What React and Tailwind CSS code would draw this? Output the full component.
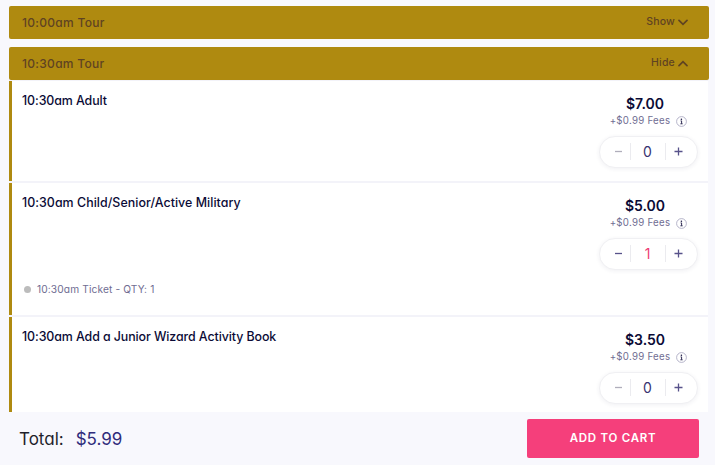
import { useState } from "react";

const tickets = [
  {
    name: "10:30am Adult",
    price: 7,
    qty: 0,
    height: "h-[102px]",
    tracking: "tracking-[-0.08px]",
  },
  {
    name: "10:30am Child/Senior/Active Military",
    price: 5,
    qty: 1,
    detail: "10:30am Ticket",
    height: "h-[134px]",
    tracking: "tracking-[0.05px]",
  },
  {
    name: "10:30am Add a Junior Wizard Activity Book",
    price: 3.5,
    qty: 0,
    height: "h-[102px]",
    tracking: "tracking-[-0.08px]",
  },
];

const FEE = 0.99;

function Chevron({ up }) {
  return (
    <svg width="10" height="7" viewBox="0 0 10 7" fill="none">
      <path
        d={up ? "M1 5.6 5 1.6l4 4" : "M1 1.4l4 4 4-4"}
        stroke="currentColor"
        strokeWidth="1.7"
        strokeLinecap="round"
      />
    </svg>
  );
}

function InfoIcon() {
  return (
    <svg width="11" height="11" viewBox="0 0 11 11" fill="none">
      <circle cx="5.5" cy="5.5" r="4.9" stroke="#a3a1bd" strokeWidth="0.8" />
      <circle cx="5.4" cy="3.2" r="0.8" fill="#1d1a45" />
      <path d="M4.6 4.9h1v2.8M4.4 7.8h2.2" stroke="#1d1a45" strokeWidth="0.9" />
    </svg>
  );
}

function TourHeader({ title, open, onClick }) {
  return (
    <button
      onClick={onClick}
      className="flex h-[33px] w-full shrink-0 items-center justify-between rounded-[2px] bg-[#af8a10] pl-[13px] pr-[21px] text-[#5f4322]"
    >
      <span className="text-[12px] leading-[33px] font-medium tracking-[0.3px]">
        {title}
      </span>
      <span className="flex items-center gap-[3px] pb-px text-[10.5px] font-medium tracking-[0.2px]">
        {open ? "Hide" : "Show"}
        <Chevron up={open} />
      </span>
    </button>
  );
}

function Stepper({ qty, onChange }) {
  return (
    <div className="mt-[8px] flex h-[32px] w-[99px] items-center rounded-full border border-[#f0f0f3] bg-white pb-[2px] text-[#57528a] shadow-[0_1px_4px_rgba(40,40,80,0.07)]">
      <button
        onClick={() => onChange(Math.max(0, qty - 1))}
        className={`flex h-full w-[30px] items-center justify-end pr-[8px] ${
          qty ? "" : "text-[#b0aebb]"
        }`}
      >
        <svg width="7" height="7" viewBox="0 0 7 7">
          <path d="M0 3.5h7" stroke="currentColor" strokeWidth="1.3" />
        </svg>
      </button>
      <span
        className={`flex h-[17px] w-[36px] items-center justify-center border-x border-[#ebebef] pr-px text-[14px] ${
          qty ? "text-[#ee3a73]" : "text-[#37336f]"
        }`}
      >
        {qty}
      </span>
      <button
        onClick={() => onChange(qty + 1)}
        className="flex h-full flex-1 items-center pl-[8px]"
      >
        <svg width="9" height="9" viewBox="0 0 9 9">
          <path
            d="M0.5 4.5h8M4.5 0.5v8"
            stroke="currentColor"
            strokeWidth="1.3"
          />
        </svg>
      </button>
    </div>
  );
}

function TicketRow({ ticket, qty, onChange }) {
  return (
    <div className={`mr-px shrink-0 bg-[#f3f3f9] py-px ${ticket.height}`}>
      <div className="flex h-full justify-between border-l-[3px] border-[#af8a10] bg-white pl-[10px] pr-[10px]">
        <div className="flex flex-col justify-between pt-[10px] pb-[16px]">
          <h3
            className={`text-[12.4px] leading-[20px] font-medium text-[#0b0b36] ${ticket.tracking}`}
          >
            {ticket.name}
          </h3>
          {ticket.detail && (
            <p className="flex items-center pl-[2px] text-[10.2px] leading-[20px] tracking-[0.12px] text-[#706d92]">
              <span className="mr-[6px] size-[7px] rounded-full bg-[#bcbcbc]" />
              {ticket.detail} - QTY: {qty}
            </p>
          )}
        </div>

        {/* PRICE */}
        <div className="flex w-[99px] flex-col items-center pt-[14px]">
          <span className="mr-[7px] text-[14px] leading-[18px] font-semibold text-[#0b0b36]">
            ${ticket.price.toFixed(2)}
          </span>
          <span className="flex items-center gap-[6px] pt-px text-[9.7px] leading-[14px] tracking-[0.26px] text-[#706d92]">
            +${FEE} Fees
            <InfoIcon />
          </span>
          <Stepper qty={qty} onChange={onChange} />
        </div>
      </div>
    </div>
  );
}

export default function App() {
  const [open, setOpen] = useState(true);
  const [quantities, setQuantities] = useState(tickets.map((t) => t.qty));

  const total = tickets.reduce(
    (sum, t, i) => sum + quantities[i] * (t.price + FEE),
    0,
  );

  const setQty = (index, value) => {
    setQuantities((prev) => prev.map((q, i) => (i === index ? value : q)));
  };

  return (
    <div className="flex h-[465px] w-[715px] flex-col overflow-hidden bg-[#f8f8fd] font-[Inter,'Open_Sans',sans-serif] [font-feature-settings:'cv11']">
      <div className="flex h-[412px] flex-col overflow-hidden pt-[6px] pr-[6px] pl-[9px]">
        <TourHeader title="10:00am Tour" open={false} />
        <div className="h-[8px] shrink-0" />
        <TourHeader
          title="10:30am Tour"
          open={open}
          onClick={() => setOpen(!open)}
        />
        {open &&
          tickets.map((ticket, i) => (
            <TicketRow
              key={ticket.name}
              ticket={ticket}
              qty={quantities[i]}
              onChange={(value) => setQty(i, value)}
            />
          ))}
      </div>

      {/* FOOTER */}
      <div className="flex h-[53px] items-center justify-between pr-[16px] pl-[19px]">
        <p className="pt-[2px] text-[17px] text-[#1f1f2b]">
          Total:
          <span className="ml-[12px] text-[#302c7c]">${total.toFixed(2)}</span>
        </p>
        <button className="h-[39px] w-[172px] rounded-[2px] bg-[#f53f7b] text-[11.5px] font-semibold tracking-[0.75px] text-white">
          ADD TO CART
        </button>
      </div>
    </div>
  );
}
